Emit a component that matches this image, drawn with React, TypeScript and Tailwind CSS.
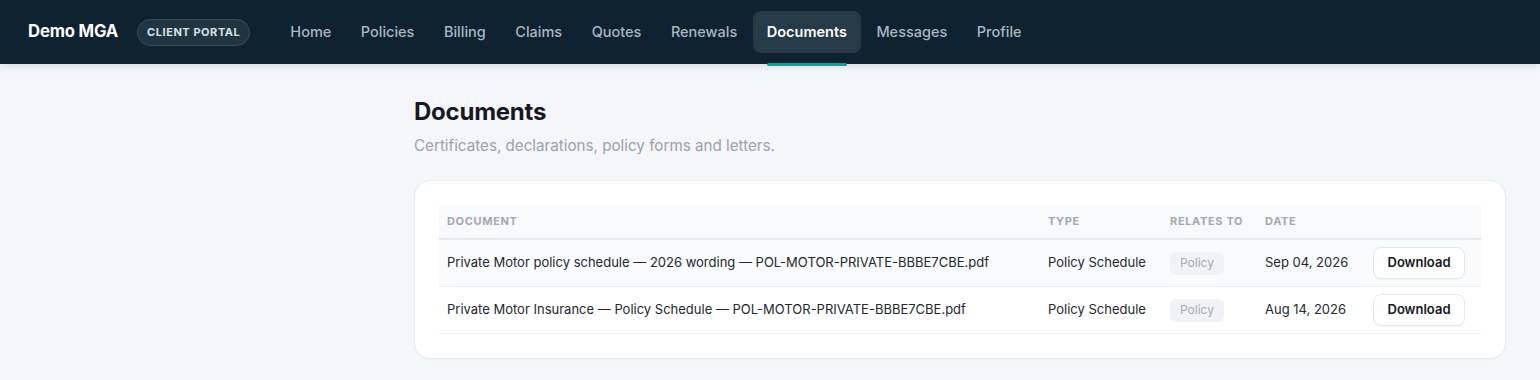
import React from 'react';

const navItems = ['Home', 'Policies', 'Billing', 'Claims', 'Quotes', 'Renewals', 'Documents', 'Messages', 'Profile'];

const documents = [
    {
        name: 'Private Motor policy schedule — 2026 wording — POL-MOTOR-PRIVATE-BBBE7CBE.pdf',
        type: 'Policy Schedule',
        relatesTo: 'Policy',
        date: 'Sep 04, 2026',
    },
    {
        name: 'Private Motor Insurance — Policy Schedule — POL-MOTOR-PRIVATE-BBBE7CBE.pdf',
        type: 'Policy Schedule',
        relatesTo: 'Policy',
        date: 'Aug 14, 2026',
    },
];

const Header = () => {
    return (
        <header className="relative z-10 h-16 bg-[#0e2230] flex items-center pl-7 shadow-[0_2px_8px_rgba(15,23,42,0.12)]">
            <span className="text-white text-[16.7px] font-bold tracking-[-0.01em]">Demo MGA</span>
            <span className="ml-[19px] h-[27px] px-[9px] flex items-center rounded-full bg-[#1f3541] border border-[#3a4f5b] text-[#d9e1e6] text-[11px] font-bold tracking-[0.05em] uppercase">
                Client Portal
            </span>
            <nav className="ml-[26px] flex items-center gap-[1.5px] h-full">
                {navItems.map((item) => {
                    const active = item === 'Documents';
                    return (
                        <div key={item} className="relative h-full flex items-center">
                            <a
                                href="#"
                                className={
                                    active
                                        ? 'px-[14px] h-[42px] flex items-center rounded-lg bg-[#263b48] text-white text-[14.5px] font-semibold'
                                        : 'px-[14px] h-[42px] flex items-center rounded-lg text-[#a9b7c2] text-[14.5px] font-medium'
                                }
                            >
                                {item}
                            </a>
                            {active && (
                                <span className="absolute left-[14px] right-[14px] -bottom-[2px] h-[3px] rounded-full bg-[#169e94]" />
                            )}
                        </div>
                    );
                })}
            </nav>
        </header>
    );
};

const App = () => {
    return (
        <div className="min-h-[380px] bg-[#f4f6f9] font-['Inter',sans-serif] antialiased">
            <Header />
            <div className="flex">
                <aside className="w-[414px] shrink-0" />
                <main className="flex-1 pr-[34px] pt-[32px] pb-6">
                    <h1 className="text-2xl font-bold text-[#16191f] tracking-[-0.01em]">Documents</h1>
                    <p className="mt-[6px] text-[15.2px] leading-6 text-[#9ba1aa]">Certificates, declarations, policy forms and letters.</p>

                    <div className="mt-[22px] bg-white border border-[#e7eaef] rounded-2xl p-6 shadow-[0_1px_2px_rgba(15,23,42,0.03)]">
                        <div className="grid grid-cols-[1fr_122px_95px_108px_116px] h-[35px] items-center bg-[#f8f9fb] border-b-2 border-[#e6e9ee] text-[11px] font-bold uppercase tracking-[0.06em] text-[#a3a8b0]">
                            <div className="px-2">Document</div>
                            <div className="px-2">Type</div>
                            <div className="px-2">Relates to</div>
                            <div className="px-2">Date</div>
                            <div />
                        </div>
                        {documents.map((doc, i) => (
                            <div
                                key={doc.name}
                                className={
                                    'grid grid-cols-[1fr_122px_95px_108px_116px] h-[47px] items-center border-b border-[#eceef2] text-[13px] text-[#23272f] ' +
                                    (i === 0 ? 'bg-[#fafbfc]' : 'bg-white')
                                }
                            >
                                <div className="px-2 truncate">{doc.name}</div>
                                <div className="px-2">{doc.type}</div>
                                <div className="px-2">
                                    <span className="inline-flex items-center h-[23px] px-[10px] rounded-md bg-[#f0f2f6] text-[#a4aab3] text-xs">
                                        {doc.relatesTo}
                                    </span>
                                </div>
                                <div className="px-2">{doc.date}</div>
                                <div className="px-2">
                                    <button className="w-[92px] h-[32px] rounded-lg border border-[#e3e6eb] bg-white text-[13px] font-semibold text-[#14171c] shadow-[0_1px_1px_rgba(15,23,42,0.03)]">
                                        Download
                                    </button>
                                </div>
                            </div>
                        ))}
                    </div>
                </main>
            </div>
        </div>
    );
};

export default App;
